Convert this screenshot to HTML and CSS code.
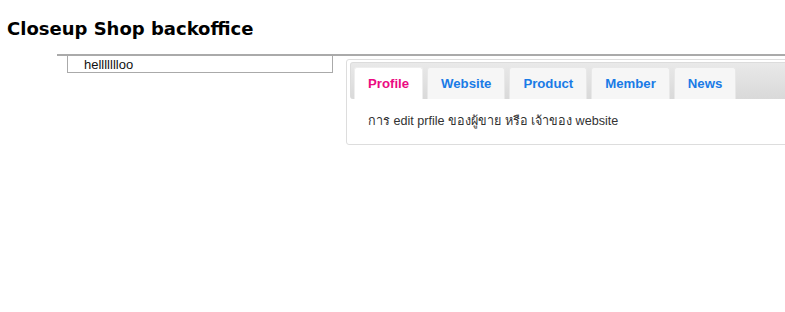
FILE: index.html
```html
<!DOCTYPE html>
<html lang="th">

<head>
    <meta charset="UTF-8">
    <title>Closeup Shop backoffice</title>
    <link rel="stylesheet" href="styles.css">
</head>

<body>

<h1 class="title">Closeup Shop backoffice</h1>

<div class="main">
    <div class="sidebar">hellllllloo</div>

    <div class="tabs">
        <ul class="tab-nav">
            <li class="tab active">Profile</li>
            <li class="tab">Website</li>
            <li class="tab">Product</li>
            <li class="tab">Member</li>
            <li class="tab">News</li>
        </ul>
        <div class="tab-panel">
            การ edit prfile ของผู้ขาย หรือ เจ้าของ website
        </div>
    </div>
</div>

</body>

</html>
```

FILE: styles.css
```css
html, body {
    margin: 0;
    padding: 0;
    overflow: hidden;
    background: white;
}

body {
    font-family: "Liberation Sans", Arial, sans-serif;
}

.title {
    font-family: "DejaVu Sans", Verdana, sans-serif;
    font-size: 18px;
    font-weight: bold;
    margin: 0;
    padding: 18px 7px 0;
    height: 54px;
    box-sizing: border-box;
    line-height: 22px;
    color: black;
}

.main {
    margin-left: 57px;
    width: 900px;
    border-top: 2px solid #aaa;
    display: flex;
    align-items: flex-start;
}

.sidebar {
    margin-left: 10px;
    width: 266px;
    height: 17px;
    border: 1px solid #aaa;
    border-top: none;
    box-sizing: border-box;
    padding: 1px 0 0 16px;
    font-size: 13px;
    line-height: 15px;
    color: #111;
}

.tabs {
    margin-left: 13px;
    margin-top: 3px;
    flex: 1;
    border: 1px solid #ddd;
    border-radius: 3px;
    padding: 2px 3px;
}

.tab-nav {
    list-style: none;
    margin: 0;
    padding: 4px 3px 0;
    display: flex;
    gap: 4px;
    background: linear-gradient(#e9e9e9, #d9d9d9);
    border: 1px solid #dcdcdc;
    border-radius: 3px;
    border-bottom: none;
}

.tab {
    padding: 0 13px;
    height: 32px;
    line-height: 31px;
    font-size: 13.2px;
    font-weight: bold;
    color: #1a7be6;
    background: #f6f6f6;
    border: 1px solid #e8e8e8;
    border-bottom: none;
    border-radius: 3px 3px 0 0;
    box-sizing: border-box;
}

.tab.active {
    color: #eb0a82;
    background: white;
    border-color: #eee;
}

.tab-panel {
    padding: 14px 18px 13px;
    font-size: 12.6px;
    line-height: 16px;
    color: #333;
}
```
